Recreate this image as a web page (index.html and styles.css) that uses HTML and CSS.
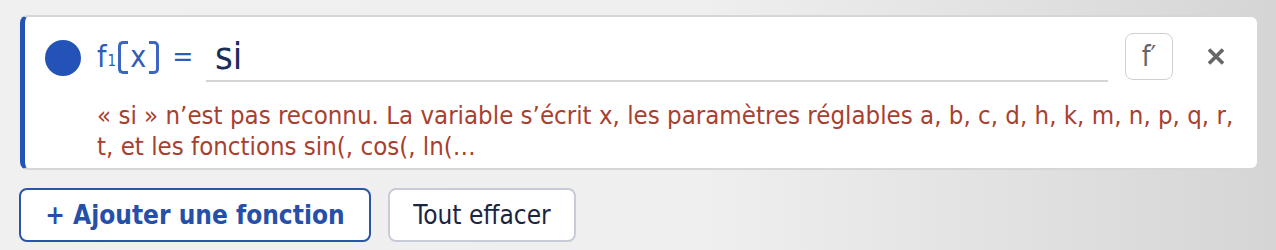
FILE: index.html
```html
<!DOCTYPE html>
<html lang="fr">
<head>
<meta charset="utf-8">
<link rel="stylesheet" href="styles.css">
</head>
<body>
<div class="page">
  <div class="card">
    <div class="row">
      <span class="dot"></span>
      <span class="label">f<sub>1</sub><span class="paren paren-l">(</span>x<span class="paren paren-r">)</span><span class="eq">=</span></span>
      <div class="input"><span class="value">si</span></div>
      <button class="deriv">f′</button>
      <button class="close" aria-label="Supprimer"><svg width="18" height="17" viewBox="0 0 18 17"><path d="M2 1.5 L16 15.5 M16 1.5 L2 15.5" stroke="#666" stroke-width="3.6" stroke-linecap="butt"/></svg></button>
    </div>
    <p class="error">« si » n’est pas reconnu. La variable s’écrit x, les paramètres réglables a, b, c, d, h, k, m, n, p, q, r, t, et les fonctions sin(, cos(, ln(…</p>
  </div>
  <div class="actions">
    <button class="btn btn-primary">+ Ajouter une fonction</button>
    <button class="btn btn-secondary">Tout effacer</button>
  </div>
</div>
</body>
</html>
```
FILE: styles.css
```css
* { box-sizing: border-box; }
html, body { margin: 0; padding: 0; }
body {
  width: 1276px;
  height: 250px;
  overflow: hidden;
  background: linear-gradient(90deg, #f0f0f0 0%, #efefef 55%, #dedede 85%, #d5d5d5 100%);
  font-family: "DejaVu Sans Condensed", "DejaVu Sans", sans-serif;
}
.page {
  padding: 15px 17px 0 20px;
}
.card {
  background: #fff;
  border: 2px solid #d6d6d6;
  border-left: 5px solid #2453b8;
  border-radius: 8px;
  height: 155px;
  padding: 16px 26px 0 20px;
}
.row {
  display: flex;
  align-items: center;
  height: 47px;
}
.dot {
  width: 36px;
  height: 36px;
  border-radius: 50%;
  background: #2453b8;
  flex: none;
  margin-top: 2px;
}
.label {
  margin-left: 16px;
  color: #2e5cb8;
  font-size: 30px;
  width: 109px;
  flex: none;
  display: flex;
  align-items: center;
  line-height: 1;
}
.label sub {
  font-size: 15px;
  margin-top: 10px;
  margin-left: 1px;
}
.paren {
  display: inline-block;
  color: transparent;
  height: 33px;
  line-height: 27px;
  border: 3px solid #3c66c2;
  font-size: 20px;
  margin-top: 2px;
}
.paren-l {
  border-right: none;
  border-radius: 5px 0 0 5px;
  margin-left: 2px;
  margin-right: 2px;
}
.paren-r {
  border-left: none;
  border-radius: 0 5px 5px 0;
  margin-left: 3px;
}
.eq { margin-left: 13px; font-size: 28px; }
.input {
  flex: 1;
  align-self: stretch;
  border-bottom: 2px solid #d4d4d4;
  margin-bottom: -2px;
  padding-left: 9px;
  display: flex;
  align-items: center;
}
.value {
  font-size: 38px;
  color: #1c2d57;
  line-height: 1;
  margin-top: -2px;
}
.deriv {
  margin-left: 17px;
  width: 48px;
  height: 47px;
  border: 1.5px solid #d0d0d0;
  border-radius: 8px;
  background: #fff;
  color: #666;
  font-family: inherit;
  font-size: 28px;
  padding: 0;
  flex: none;
}
.close {
  margin-left: 28px;
  background: none;
  border: none;
  padding: 0;
  width: 30px;
  height: 30px;
  display: flex;
  align-items: center;
  justify-content: center;
  flex: none;
}
.error {
  margin: 20px -14px 0 52px;
  color: #a8402f;
  font-size: 25.6px;
  line-height: 31px;
}
.actions {
  display: flex;
  gap: 17px;
  margin-top: 18px;
  margin-left: -1px;
}
.btn {
  height: 54px;
  border-radius: 8px;
  background: #fff;
  font-family: inherit;
  font-size: 26px;
  padding: 0;
}
.btn-primary {
  width: 352px;
  border: 2px solid #2a55a8;
  color: #2650a8;
  font-weight: bold;
}
.btn-secondary {
  width: 188px;
  border: 2px solid #c8ccd8;
  color: #1a2540;
}
```
